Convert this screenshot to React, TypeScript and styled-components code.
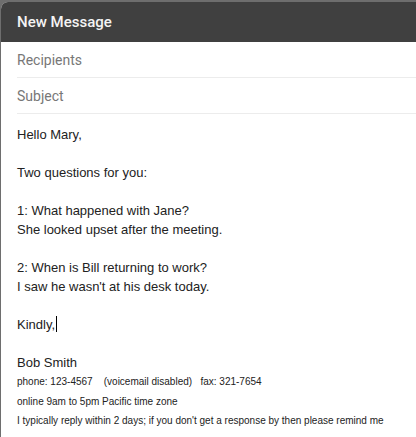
import React from "react";
import styled, { createGlobalStyle } from "styled-components";

const Global = createGlobalStyle`
  html, body { margin: 0; padding: 0; }
  body {
    background: #6e6e6e;
    width: 416px;
    height: 437px;
    overflow: hidden;
  }
`;

const Backdrop = styled.div`
  padding: 2px 0 0 1px;
  height: 437px;
  box-sizing: border-box;
`;

const Dialog = styled.div`
  background: #fff;
  border-top-left-radius: 7px;
  overflow: hidden;
  height: 100%;
  display: flex;
  flex-direction: column;
`;

const Header = styled.div`
  background: #404040;
  height: 40px;
  display: flex;
  align-items: center;
  padding-left: 16px;
  font-family: Roboto, "Noto Sans", sans-serif;
  font-weight: 500;
  font-size: 15px;
  color: #f4f4f4;
`;

const Field = styled.div`
  margin-left: 16px;
  height: 36px;
  box-sizing: border-box;
  border-bottom: 1px solid #ececec;
  display: flex;
  align-items: center;
  font-family: Roboto, "Noto Sans", sans-serif;
  font-size: 14px;
  color: #777777;
`;

const Body = styled.div`
  padding: 11px 16px 0;
  font-family: "Liberation Sans", Arial, sans-serif;
  font-size: 13px;
  line-height: 19px;
  color: #222222;
`;

const Line = styled.div<{ $small?: boolean }>`
  min-height: 19px;
  white-space: pre;
  font-size: ${(p) => (p.$small ? "10px" : "13px")};
  line-height: ${(p) => (p.$small ? "19.5px" : "19px")};
`;

const Caret = styled.span`
  display: inline-block;
  width: 1px;
  height: 16px;
  background: #000;
  vertical-align: -3px;
  margin-left: 1px;
`;

export default function App() {
  return (
    <>
      <Global />
      <Backdrop>
        <Dialog>
          <Header>New Message</Header>
          <Field>Recipients</Field>
          <Field>Subject</Field>
          <Body>
            <Line>Hello Mary,</Line>
            <Line />
            <Line>Two questions for you:</Line>
            <Line />
            <Line>1: What happened with Jane?</Line>
            <Line>She looked upset after the meeting.</Line>
            <Line />
            <Line>2: When is Bill returning to work?</Line>
            <Line>I saw he wasn't at his desk today.</Line>
            <Line />
            <Line>
              Kindly,
              <Caret />
            </Line>
            <Line />
            <Line>Bob Smith</Line>
            <Line $small>{"phone: 123-4567    (voicemail disabled)   fax: 321-7654"}</Line>
            <Line $small>online 9am to 5pm Pacific time zone</Line>
            <Line $small>
              I typically reply within 2 days; if you don't get a response by then please remind me
            </Line>
          </Body>
        </Dialog>
      </Backdrop>
    </>
  );
}
